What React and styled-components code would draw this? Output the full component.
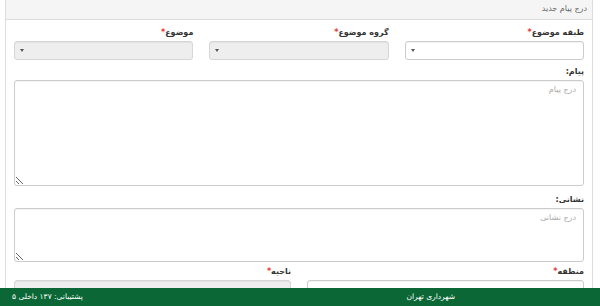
import React from 'react';
import styled, { createGlobalStyle } from 'styled-components';

const GlobalStyle = createGlobalStyle`
  html, body {
    margin: 0;
    padding: 0;
    background: #fff;
    overflow: hidden;
    font-family: "DejaVu Sans", "Noto Sans", sans-serif;
  }
`;

const Page = styled.div`
  direction: rtl;
  width: 600px;
  height: 306px;
  padding: 0 7px 0 5px;
  box-sizing: border-box;
`;

const Panel = styled.div`
  border: 1px solid #ddd;
  border-top: none;
  background: #fff;
`;

const PanelHeading = styled.div`
  height: 20px;
  box-sizing: border-box;
  background: #f5f5f5;
  border-bottom: 1px solid #ddd;
  color: #666;
  font-size: 8px;
  line-height: 18px;
  padding: 0 5px;
`;

const PanelBody = styled.div`
  padding: 6px 8px 20px;
  display: flex;
  flex-direction: column;
`;

const Row = styled.div`
  display: grid;
  grid-template-columns: repeat(${p => p.cols}, 1fr);
  column-gap: 16px;
`;

const Field = styled.div`
  display: flex;
  flex-direction: column;
`;

const Label = styled.label`
  display: block;
  font-size: 8px;
  font-weight: bold;
  color: #333;
  height: 14px;
  line-height: 14px;
  margin-bottom: 1px;
  white-space: nowrap;
`;

const Star = styled.span`
  color: #e53935;
`;

const Select = styled.div`
  height: 19px;
  box-sizing: border-box;
  border: 1px solid ${p => (p.disabled ? '#d6d6d6' : '#ccc')};
  border-radius: 3px;
  background: ${p => (p.disabled ? '#eee' : '#fff')};
  display: flex;
  align-items: center;
  justify-content: flex-end;
  padding-left: 5px;
  box-shadow: inset 0 1px 1px rgba(0, 0, 0, 0.05);
`;

const Arrow = styled.span`
  width: 0;
  height: 0;
  border-left: 2px solid transparent;
  border-right: 2px solid transparent;
  border-top: 3px solid #555;
`;

const TextArea = styled.textarea`
  display: block;
  box-sizing: border-box;
  width: 100%;
  height: ${p => p.h}px;
  border: 1px solid #ccc;
  border-radius: 3px;
  padding: 4px 7px;
  font-family: "DejaVu Sans", "Noto Sans", sans-serif;
  font-size: 8px;
  direction: rtl;
  box-shadow: inset 0 1px 1px rgba(0, 0, 0, 0.05);
  &::placeholder {
    color: #aaa;
  }
`;

const Block = styled.div`
  margin-top: ${p => p.mt || 0}px;
`;

const Footer = styled.div`
  position: fixed;
  left: 0;
  right: 0;
  bottom: 0;
  height: 18px;
  background: #0b6836;
  color: #fff;
  direction: rtl;
  display: grid;
  grid-template-columns: 1fr 1fr;
  font-size: 7.5px;
  line-height: 18px;
`;

const FooterCell = styled.div`
  padding-right: ${p => p.pr || 0}px;
  padding-left: ${p => p.pl || 0}px;
  text-align: ${p => p.align};
`;

function SelectField({ label, disabled }) {
  return (
    <Field>
      <Label>
        {label}
        <Star>*</Star>
      </Label>
      <Select disabled={disabled}>
        <Arrow />
      </Select>
    </Field>
  );
}

export default function App() {
  return (
    <>
      <GlobalStyle />
      <Page>
        <Panel>
          <PanelHeading>درج پیام جدید</PanelHeading>
          <PanelBody>
            <Row cols={3}>
              <SelectField label="طبقه موضوع" />
              <SelectField label="گروه موضوع" disabled />
              <SelectField label="موضوع" disabled />
            </Row>
            <Block mt={5}>
              <Label>پیام:</Label>
              <TextArea h={106} placeholder="درج پیام" />
            </Block>
            <Block mt={7}>
              <Label>نشانی:</Label>
              <TextArea h={54} placeholder="درج نشانی" />
            </Block>
            <Block mt={3}>
              <Row cols={2}>
                <SelectField label="منطقه" />
                <SelectField label="ناحیه" disabled />
              </Row>
            </Block>
          </PanelBody>
        </Panel>
      </Page>
      <Footer>
        <FooterCell pr={145} align="right">شهرداری تهران</FooterCell>
        <FooterCell pl={12} align="left">پشتیبانی: ۱۳۷ داخلی ۵</FooterCell>
      </Footer>
    </>
  );
}
